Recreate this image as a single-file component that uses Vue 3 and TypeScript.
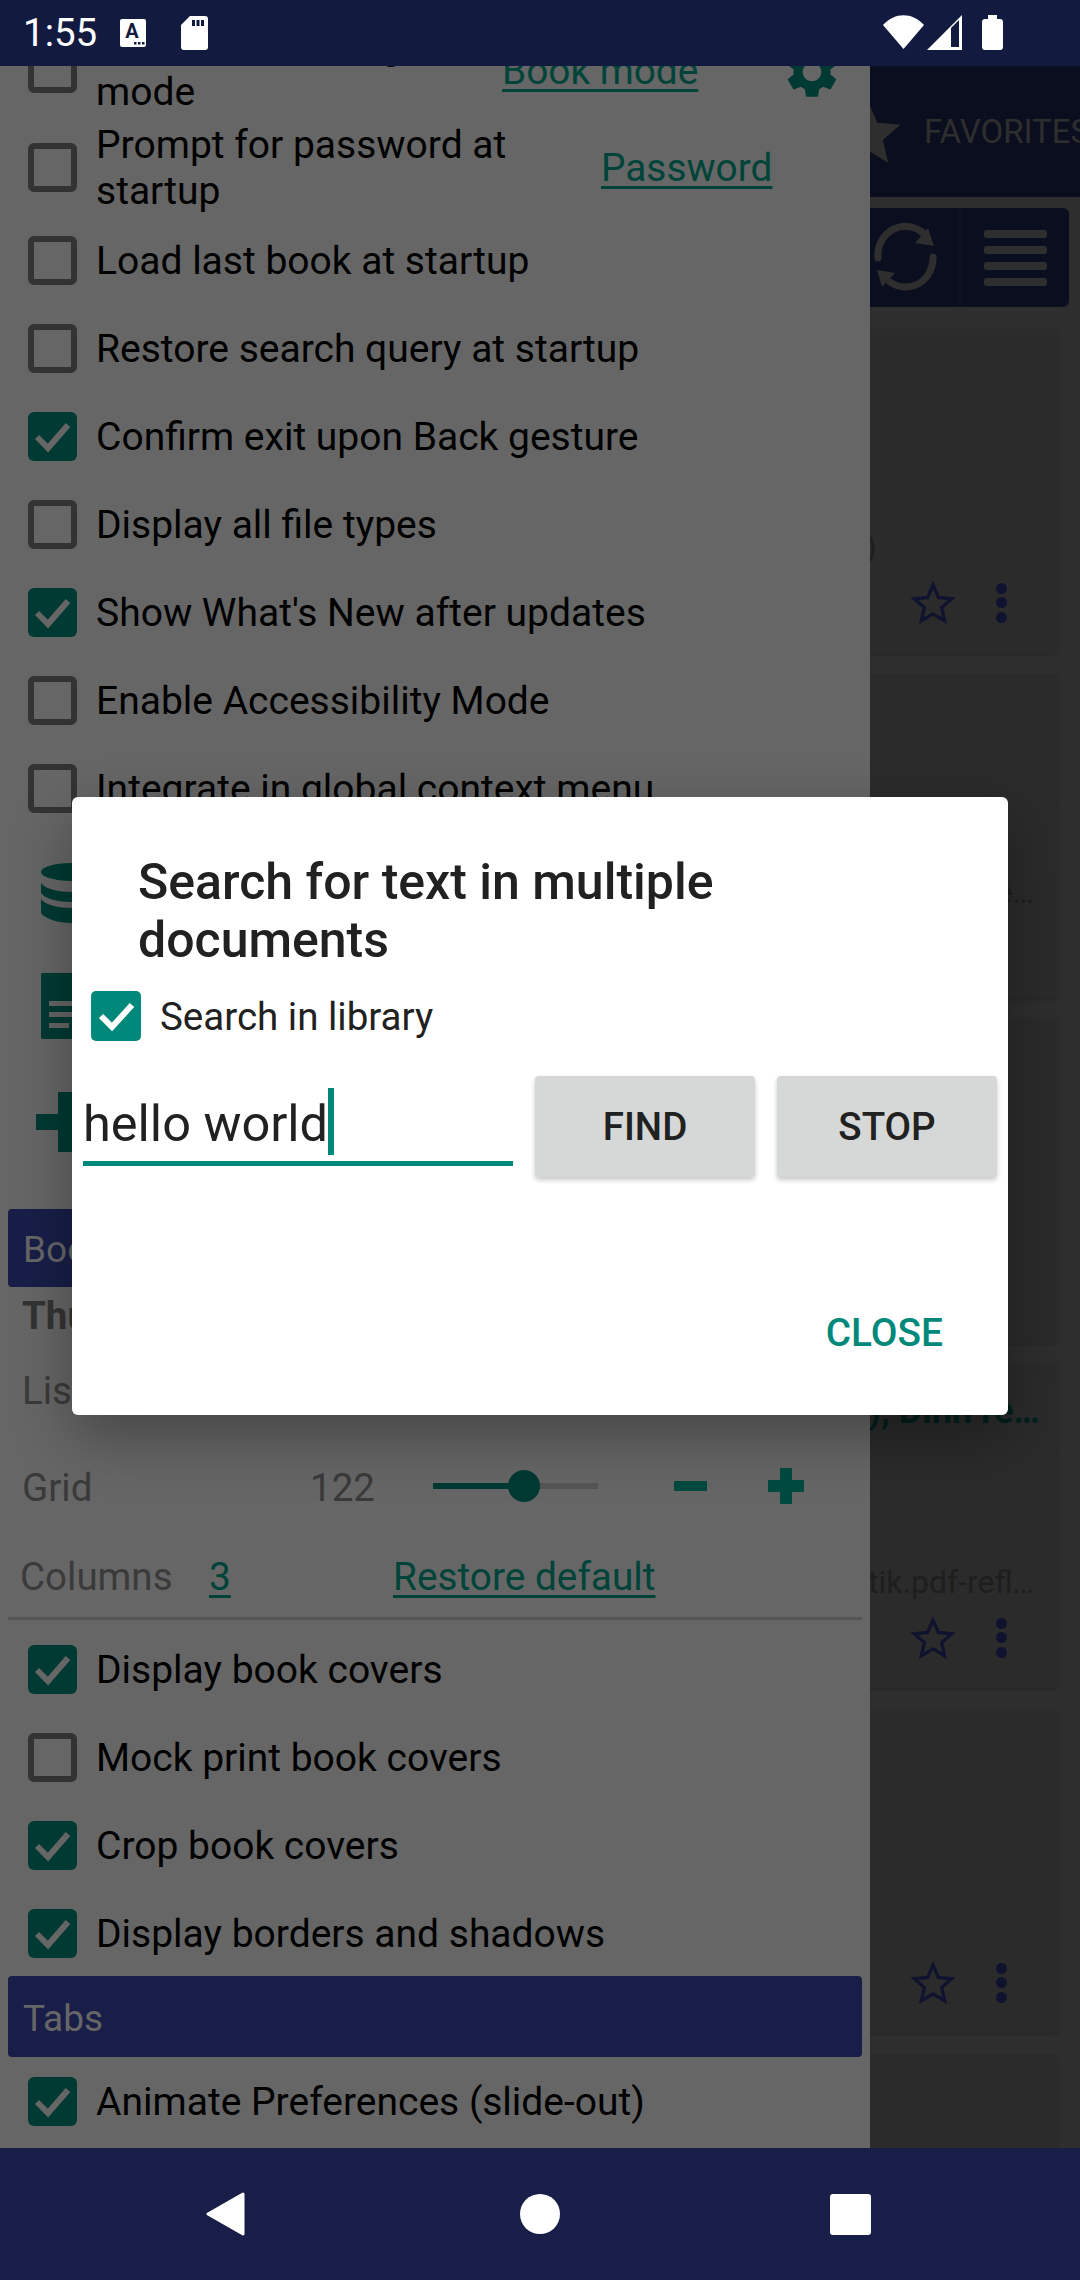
<script setup lang="ts">
interface Row { label: string; checked: boolean }
const upper: Row[] = [
  { label: 'Load last book at startup', checked: false },
  { label: 'Restore search query at startup', checked: false },
  { label: 'Confirm exit upon Back gesture', checked: true },
  { label: 'Display all file types', checked: false },
  { label: "Show What's New after updates", checked: true },
  { label: 'Enable Accessibility Mode', checked: false },
  { label: 'Integrate in global context menu', checked: false },
]
const lower: Row[] = [
  { label: 'Display book covers', checked: true },
  { label: 'Mock print book covers', checked: false },
  { label: 'Crop book covers', checked: true },
  { label: 'Display borders and shadows', checked: true },
]
interface Card { title: string; file: string; short?: boolean; star: boolean }
const cards: Card[] = [
  { title: '', file: 'Mobile Reader (2020)', short: true, star: true },
  { title: '', file: 'Android Reader guide…', star: true },
  { title: '', file: '', star: false },
  { title: '(2019), Dinh re…', file: 'Statistik.pdf-refl…', star: true },
  { title: '', file: '', star: true },
  { title: '', file: '', star: false },
]
const starPath = 'M12 2.6l2.8 6.5 7 .7-5.3 4.6 1.6 6.9-6.1-3.6-6.1 3.6 1.6-6.9L2.200 9.800l7-.7z'
</script>

<template>
  <div class="screen">
    <header class="status">
      <span class="clock">1:55</span>
      <svg class="ic-a" viewBox="0 0 26 28">
        <rect width="26" height="28" rx="2" fill="#fff" />
        <text x="12" y="19" text-anchor="middle" class="a-letter">A</text>
        <rect x="14" y="23" width="2.500" height="2.500" fill="#131a40" />
        <rect x="18" y="23" width="2.500" height="2.500" fill="#131a40" />
        <rect x="22" y="23" width="2.500" height="2.500" fill="#131a40" />
      </svg>
      <svg class="ic-sd" viewBox="0 0 27 34">
        <path d="M9 0H24a3 3 0 0 1 3 3V31a3 3 0 0 1-3 3H3a3 3 0 0 1-3-3V9z" fill="#fff" />
        <rect x="11" y="4" width="3" height="6" fill="#131a40" />
        <rect x="15.500" y="4" width="3" height="6" fill="#131a40" />
        <rect x="20" y="4" width="3" height="6" fill="#131a40" />
      </svg>
      <span class="status-gap"></span>
      <svg class="ic-wifi" viewBox="0 0 41 34">
        <path d="M0 10C12-3 29-3 41 10L20.500 34Z" fill="#fff" />
      </svg>
      <svg class="ic-signal" viewBox="0 0 35 35">
        <path d="M0 35L35 0V35ZM24 13V32H32V5Z" fill="#fff" fill-rule="evenodd" />
      </svg>
      <svg class="ic-batt" viewBox="0 0 21 35">
        <path d="M6 0H15V4H18a3 3 0 0 1 3 3V32a3 3 0 0 1-3 3H3a3 3 0 0 1-3-3V7a3 3 0 0 1 3-3H6Z" fill="#fff" />
      </svg>
    </header>

    <main class="main">
      <section class="drawer">
        <div class="drawer-inner">
          <div class="row row-first">
            <span class="box"></span>
            <span class="label">Start with reading<br />mode</span>
            <a class="link link-book">Book mode</a>
            <svg class="gear" viewBox="0 0 24 24">
              <path d="M19.140 12.940c.04-.3.06-.61.06-.94 0-.32-.02-.64-.07-.94l2.030-1.580a.49.49 0 0 0 .12-.61l-1.920-3.320a.488.488 0 0 0-.59-.22l-2.390.96c-.5-.38-1.030-.7-1.620-.94l-.36-2.540a.484.484 0 0 0-.48-.41h-3.840c-.24 0-.43.17-.47.41l-.36 2.540c-.59.24-1.130.57-1.620.94l-2.390-.96c-.22-.08-.47 0-.59.22L2.740 8.870c-.12.21-.08.47.12.61l2.030 1.580c-.05.3-.09.63-.09.94s.02.64.07.94l-2.030 1.580a.49.49 0 0 0-.12.61l1.920 3.320c.12.22.37.29.59.22l2.390-.96c.5.38 1.030.7 1.620.94l.36 2.540c.05.24.24.41.48.41h3.840c.24 0 .44-.17.47-.41l.36-2.540c.59-.24 1.130-.56 1.620-.94l2.390.96c.22.08.47 0 .59-.22l1.920-3.320c.12-.22.07-.47-.12-.61l-2.010-1.580zM12 15.600c-1.980 0-3.600-1.620-3.600-3.600s1.620-3.600 3.600-3.600 3.600 1.620 3.600 3.600-1.620 3.600-3.600 3.600z" fill="#003a33" />
            </svg>
          </div>
          <div class="row row-two">
            <span class="box"></span>
            <span class="label">Prompt for password at<br />startup</span>
            <a class="link link-pass">Password</a>
          </div>
          <div v-for="r in upper" :key="r.label" class="row">
            <span class="box" :class="{ on: r.checked }">
              <svg v-if="r.checked" viewBox="0 0 49 49"><path d="M9 25l11 11 20-23" class="tick" /></svg>
            </span>
            <span class="label">{{ r.label }}</span>
          </div>

          <div class="icon-row ir-db">
            <svg class="ic-db" viewBox="0 0 60 60">
              <ellipse cx="30" cy="9" rx="30" ry="9" fill="#003a33" />
              <path d="M0 20c4 6 18 9 30 9s26-3 30-9v10c-4 6-18 9-30 9S4 36 0 30zM0 36c4 6 18 9 30 9s26-3 30-9v14c-4 6-18 10-30 10S4 56 0 50z" fill="#003a33" />
            </svg>
          </div>
          <div class="icon-row ir-doc">
            <svg class="ic-doc" viewBox="0 0 60 66">
              <path d="M2 0H58a2 2 0 0 1 2 2V64a2 2 0 0 1-2 2H2a2 2 0 0 1-2-2V2a2 2 0 0 1 2-2Z" fill="#003a33" />
              <rect x="8" y="28" width="44" height="5" fill="#666" />
              <rect x="8" y="39" width="44" height="5" fill="#666" />
              <rect x="8" y="50" width="20" height="5" fill="#666" />
            </svg>
          </div>
          <div class="icon-row ir-plus">
            <svg class="ic-plus" viewBox="0 0 60 60">
              <path d="M22 0H38V22H60V38H38V60H22V38H0V22H22Z" fill="#003a33" />
            </svg>
          </div>

          <div class="band band-book">Bookshelf</div>
          <div class="bold-line">Thumbnails</div>
          <div class="plain-line">List</div>
          <div class="grid-line">
            <span class="g-name">Grid</span>
            <span class="g-val">122</span>
            <span class="slider"><span class="fill"></span><span class="thumb"></span></span>
            <span class="minus"></span>
            <span class="plus"></span>
          </div>
          <div class="cols-line">
            <span class="c-name">Columns</span>
            <a class="link c-val">3</a>
            <a class="link c-restore">Restore default</a>
          </div>
          <div class="divider"></div>
          <div v-for="r in lower" :key="r.label" class="row">
            <span class="box" :class="{ on: r.checked }">
              <svg v-if="r.checked" viewBox="0 0 49 49"><path d="M9 25l11 11 20-23" class="tick" /></svg>
            </span>
            <span class="label">{{ r.label }}</span>
          </div>
          <div class="band band-tabs">Tabs</div>
          <div class="row">
            <span class="box on">
              <svg viewBox="0 0 49 49"><path d="M9 25l11 11 20-23" class="tick" /></svg>
            </span>
            <span class="label">Animate Preferences (slide-out)</span>
          </div>
        </div>
      </section>

      <section class="panel">
        <div class="tabbar">
          <svg class="tab-star" viewBox="0 0 24 24"><path d="M12 1.500l3.200 7.300 7.900.7-6 5.200 1.800 7.800L12 18.400l-6.900 4.100 1.800-7.800-6-5.200 7.900-.7z" fill="#2e2e2e" /></svg>
          <span class="tab-text">FAVORITES</span>
        </div>
        <div class="toolbar">
          <div class="tool tool-sync">
            <svg class="ic-sync" viewBox="0 0 70 72">
              <path d="M8 38A27.500 29 0 0 1 53 13" class="sync-arc" />
              <path d="M58 8L64 26 45 23Z" fill="#2e2e2e" />
              <path d="M63 37A27.500 29 0 0 1 20 62" class="sync-arc" />
              <path d="M7 50L25 53 12 67Z" fill="#2e2e2e" />
            </svg>
          </div>
          <div class="tool tool-menu">
            <i></i><i></i><i></i><i></i>
          </div>
        </div>
        <div class="cards">
          <article v-for="(c, i) in cards" :key="i" class="card">
            <div class="c-title">{{ c.title }}</div>
            <div class="c-file" :class="{ short: c.short }">{{ c.file }}</div>
            <div class="c-foot" :class="{ hidden: !c.star }">
              <svg class="c-star" viewBox="0 0 24 24"><path :d="starPath" class="star-line" /></svg>
              <span class="dots"><i></i><i></i><i></i></span>
            </div>
          </article>
        </div>
      </section>

      <div class="dialog">
        <h2 class="d-title">Search for text in multiple<br />documents</h2>
        <label class="d-check">
          <span class="d-box">
            <svg viewBox="0 0 50 50"><path d="M10 25l11 11 20-22" class="d-tick" /></svg>
          </span>
          <span class="d-check-text">Search in library</span>
        </label>
        <div class="d-form">
          <div class="d-input"><span>hello world</span><i class="caret"></i></div>
          <button class="d-btn d-find">FIND</button>
          <button class="d-btn">STOP</button>
        </div>
        <div class="d-actions"><button class="d-close">CLOSE</button></div>
      </div>
    </main>

    <footer class="nav">
      <svg class="n-back" viewBox="0 0 39 44"><path d="M37 2L2 22 37 42Z" fill="#fff" stroke="#fff" stroke-width="3" stroke-linejoin="round" /></svg>
      <span class="n-home"></span>
      <span class="n-recent"></span>
    </footer>
  </div>
</template>

<style>
html, body { margin: 0; padding: 0; background: #181e48; }
</style>

<style scoped>
.screen {
  width: 1080px;
  height: 2280px;
  display: flex;
  flex-direction: column;
  overflow: hidden;
  font-family: Roboto, "Noto Sans", sans-serif;
  color: #000;
}
.status {
  height: 66px;
  flex: none;
  background: #131a40;
  display: flex;
  align-items: flex-start;
  color: #fff;
}
.clock { margin-left: 23px; font-size: 38.500px; line-height: 66px; width: 97px; }
.ic-a { width: 26px; height: 28px; margin-top: 19px; }
.a-letter { font: 700 20px Roboto, sans-serif; fill: #131a40; }
.ic-sd { width: 27px; height: 34px; margin: 16px 0 0 35px; }
.status-gap { flex: 1; }
.ic-wifi { width: 41px; height: 34px; margin-top: 15px; }
.ic-signal { width: 35px; height: 35px; margin: 15px 0 0 3px; }
.ic-batt { width: 21px; height: 35px; margin: 15px 77px 0 20px; }

.main { flex: 1; min-height: 0; position: relative; display: flex; overflow: hidden; }
.drawer { width: 870px; flex: none; background: #666; overflow: hidden; }
.drawer-inner { margin-top: -48px; }
.row { height: 88px; display: flex; align-items: center; }
.row-first { height: 100px; }
.row-two { height: 98px; }
.box {
  width: 49px;
  height: 49px;
  margin-left: 28px;
  flex: none;
  box-sizing: border-box;
  border: 6px solid #333;
  border-radius: 6px;
}
.box.on { background: #003a33; border: none; }
.box svg { display: block; width: 49px; height: 49px; }
.tick { fill: none; stroke: #666; stroke-width: 6; }
.label { margin-left: 19px; padding-top: 2px; font-size: 39px; line-height: 46px; color: #000; }
.row-first .label, .row-two .label { width: 440px; flex: none; }
.link { color: #004439; font-size: 38.800px; text-decoration: underline; text-underline-offset: 5px; }
.link-book { margin-left: -34px; margin-top: 4px; }
.link-pass { margin-left: 65px; }
.gear { width: 62px; height: 62px; margin-left: 83px; margin-top: 8px; }
.icon-row { display: flex; align-items: center; padding-left: 41px; }
.ir-db { height: 108px; padding-top: 14px; box-sizing: border-box; }
.ir-doc { height: 132px; }
.ir-plus { height: 100px; padding-left: 36px; }
.ic-db { width: 60px; height: 60px; }
.ic-doc { width: 60px; height: 66px; }
.ic-plus { width: 60px; height: 60px; }
.band {
  margin: 0 8px;
  background: #181e48;
  color: #666;
  border-radius: 4px;
  font-size: 37px;
  display: flex;
  align-items: center;
  padding-left: 15px;
  padding-top: 3px;
  box-sizing: border-box;
}
.band-book { height: 78px; margin-top: 37px; }
.band-tabs { height: 81px; margin-top: -1px; }
.bold-line { height: 58px; line-height: 58px; padding-left: 22px; font-size: 38.500px; font-weight: 700; color: #333; }
.plain-line { height: 92px; line-height: 92px; padding-left: 22px; font-size: 38.500px; color: #3a3a3a; }
.grid-line { height: 98px; display: flex; align-items: center; font-size: 38.500px; color: #3a3a3a; }
.g-name { margin-left: 22px; width: 288px; padding-top: 2px; }
.g-val { width: 123px; padding-top: 2px; }
.slider { position: relative; width: 165px; height: 6px; background: #555; flex: none; }
.fill { position: absolute; left: 0; top: 0; height: 6px; width: 91px; background: #003a33; }
.thumb { position: absolute; left: 75px; top: -13px; width: 32px; height: 32px; border-radius: 50%; background: #003a33; }
.minus { width: 33px; height: 10px; margin-left: 76px; background: #004a40; border-radius: 1px; }
.plus { position: relative; width: 36px; height: 12px; margin-left: 61px; background: #004a40; border-radius: 1px; }
.plus::after { content: ""; position: absolute; left: 12px; top: -12px; width: 12px; height: 36px; background: #004a40; border-radius: 1px; }
.cols-line { height: 82px; display: flex; align-items: center; font-size: 38.500px; color: #3a3a3a; }
.c-name { margin-left: 20px; width: 189px; }
.c-val { width: 184px; }
.divider { height: 3px; margin: 0 8px 5px; background: #555; }

.panel { flex: 1; min-width: 0; background: #2e2e2e; overflow: hidden; }
.tabbar { height: 131px; background: #0a0e1e; display: flex; align-items: center; overflow: hidden; }
.tab-star { width: 70px; height: 70px; margin-left: -37px; flex: none; }
.tab-text { margin-left: 21px; font-size: 33px; color: #2e2e2e; white-space: nowrap; }
.toolbar {
  height: 99px;
  margin: 11px 11px 0 0;
  background: #0a0e1e;
  border-radius: 0 6px 6px 0;
  display: flex;
}
.tool { height: 99px; display: flex; }
.tool-sync { width: 91px; border-right: 2px solid #0e1224; box-sizing: border-box; }
.ic-sync { width: 70px; height: 72px; margin-top: 12px; }
.sync-arc { fill: none; stroke: #2e2e2e; stroke-width: 7; stroke-linecap: round; }
.tool-menu { flex: 1; flex-direction: column; align-items: center; padding-top: 22px; box-sizing: border-box; gap: 8px; }
.tool-menu i { display: block; width: 63px; height: 8px; border-radius: 3px; background: #2e2e2e; }
.cards { margin: 22px 22px 0 -300px; display: flex; flex-direction: column; gap: 21px; }
.card {
  height: 324px;
  flex: none;
  background: #2b2b2b;
  border-radius: 4px;
  box-shadow: 0 2px 3px rgba(0, 0, 0, 0.15);
  display: flex;
  flex-direction: column;
  text-align: right;
  padding-right: 24px;
}
.c-title { height: 30px; margin: 32px -6px 0 0; line-height: 30px; font-size: 36px; font-weight: 700; color: #02201c; white-space: nowrap; }
.c-file { margin-top: auto; margin-bottom: 3px; height: 44px; line-height: 44px; font-size: 32px; color: #1e1e1e; white-space: nowrap; }
.c-file.short { padding-right: 186px; }
.c-foot { height: 81px; display: flex; justify-content: flex-end; align-items: center; padding-bottom: 20px; box-sizing: border-box; }
.c-foot.hidden { visibility: hidden; }
.c-star { width: 46px; height: 46px; margin-right: 40px; }
.star-line { fill: none; stroke: #10132f; stroke-width: 1.700; stroke-linejoin: miter; }
.dots { display: flex; flex-direction: column; gap: 3.500px; margin-right: 27px; }
.dots i { display: block; width: 11px; height: 11px; border-radius: 50%; background: #10132f; }

.dialog {
  position: absolute;
  left: 72px;
  top: 731px;
  width: 936px;
  height: 618px;
  box-sizing: border-box;
  background: #fff;
  border-radius: 6px;
  box-shadow: 0 22px 60px rgba(0, 0, 0, 0.32);
  display: flex;
  flex-direction: column;
}
.d-title {
  margin: 56px 0 0 66px;
  font-size: 50px;
  line-height: 58px;
  font-weight: 500;
  color: #212121;
}
.d-check { display: flex; align-items: center; margin: 22px 0 0 19px; height: 50px; }
.d-box { width: 50px; height: 50px; border-radius: 5px; background: #00897b; flex: none; }
.d-box svg { display: block; width: 50px; height: 50px; }
.d-tick { fill: none; stroke: #fff; stroke-width: 6; }
.d-check-text { margin-left: 19px; font-size: 38.500px; color: #212121; }
.d-form { display: flex; align-items: flex-start; margin: 35px 0 0 11px; }
.d-input {
  width: 430px;
  height: 90px;
  box-sizing: border-box;
  border-bottom: 5px solid #00897b;
  display: flex;
  align-items: flex-start;
  font-size: 50.500px;
  line-height: 95px;
  color: #212121;
}
.caret { width: 6px; height: 67px; margin-top: 12px; background: #00897b; flex: none; }
.d-btn {
  width: 220px;
  height: 101px;
  margin-left: 22px;
  border: 0;
  border-radius: 4px;
  background: #d6d7d7;
  box-shadow: 0 3px 5px rgba(0, 0, 0, 0.22);
  font: 500 38.500px Roboto, sans-serif;
  color: #212121;
  flex: none;
}
.d-actions { margin-top: auto; display: flex; justify-content: flex-end; padding: 0 65px 60px 0; }
.d-close { border: 0; background: none; padding: 0; font: 500 38.800px Roboto, sans-serif; color: #00897b; }

.nav { height: 132px; flex: none; background: #181e48; position: relative; display: flex; }
.n-back { position: absolute; left: 206px; top: 44px; width: 39px; height: 44px; }
.n-home { position: absolute; left: 520px; top: 46px; width: 40px; height: 40px; border-radius: 50%; background: #fff; }
.n-recent { position: absolute; left: 830px; top: 46px; width: 41px; height: 41px; border-radius: 3px; background: #fff; }
</style>
